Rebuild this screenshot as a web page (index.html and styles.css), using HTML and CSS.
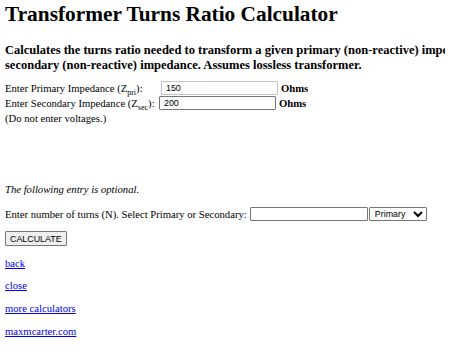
FILE: index.html
```
<!DOCTYPE html>
<html lang="en">
<head>
    <meta charset="UTF-8">
    <title>Transformer Turns Ratio Calculator</title>
    <link rel="stylesheet" href="styles.css">
</head>
<body>
    <h1>Transformer Turns Ratio Calculator</h1>
    <h3 class="intro">Calculates the turns ratio needed to transform a given primary (non-reactive) impedance to a given<br>
        secondary (non-reactive) impedance. Assumes lossless transformer.</h3>

    <form name="calc" class="calc">
        <div class="line">
            <span class="label">Enter Primary Impedance (Z<sub>pri</sub>):</span>
            <input type="text" class="field field-first" value="150">
            <b class="unit">Ohms</b>
        </div>
        <div class="line">
            <span class="label label-sec">Enter Secondary Impedance (Z<sub>sec</sub>):</span>
            <input type="text" class="field" value="200">
            <b class="unit">Ohms</b>
        </div>
        <div class="note">(Do not enter voltages.)</div>

        <!-- results get written here -->
        <div id="results" class="results"></div>

        <p class="optional"><i>The following entry is optional.</i></p>
        <p class="turns">Enter number of turns (N). Select Primary or Secondary:
            <input type="text" class="field field-turns"><select class="side">
                <option>Primary</option>
                <option>Secondary</option>
            </select>
        </p>
        <button type="button" class="calc-btn">CALCULATE</button>
    </form>

    <p><a href="#">back</a></p>
    <p><a href="#">close</a></p>
    <p><a href="#">more calculators</a></p>
    <p><a href="#">maxmcarter.com</a></p>
</body>
</html>
```

FILE: styles.css
```
html, body {
    overflow: hidden;
}

body, h1, h3, p, a, i, b, span, div {
    font-family: Tinos, "Liberation Serif", "Noto Serif", "DejaVu Serif", FreeSerif, serif;
}

body {
    margin: 0 5px;
    font-size: 10.67px;
    color: #000;
    background: #fff;
}

h1 {
    font-size: 21.33px;
    margin: 2px 0 0;
    white-space: nowrap;
}

.intro {
    font-size: 12.5px;
    margin: 16px 0 0;
    white-space: nowrap;
    line-height: 14.5px;
}

.calc {
    margin-top: 8px;
}

.line {
    display: flex;
    align-items: center;
    height: 15px;
}

.label {
    width: 156px;
}

.label-sec {
    width: 154px;
}

sub {
    font-size: 8px;
    vertical-align: -3px;
    line-height: 0;
}

.field {
    font-family: "Liberation Sans", Arial, sans-serif;
    font-size: 8.9px;
    height: 14px;
    box-sizing: border-box;
    padding: 0 4px;
    border: 1px solid #767676;
    border-radius: 1px;
    width: 117px;
    margin: 0;
}

.field-first {
    border-color: #c4c4c4;
}

.unit {
    margin-left: 3px;
}

.note {
    margin-top: 2px;
}

.results {
    height: 51px;
}

.optional {
    margin: 8px 0 0;
}

.turns {
    display: flex;
    align-items: center;
    margin: 12px 0 0;
}

.field-turns {
    margin-left: 3px;
    width: 118px;
}

.side {
    font-family: "Liberation Sans", Arial, sans-serif;
    font-size: 8.9px;
    height: 14px;
    width: 58px;
    padding: 0 1px;
    margin: 0 0 0 1px;
    border: 1px solid #767676;
    border-radius: 1px;
    background: #fff;
}

.calc-btn {
    display: block;
    margin-top: 10px;
    font-family: "Liberation Sans", Arial, sans-serif;
    font-size: 8.9px;
    height: 15px;
    padding: 0 4px;
    border: 1px solid #767676;
    border-radius: 1px;
    background: #efefef;
    color: #000;
}

p {
    margin: 10.67px 0;
}

a {
    color: #0000ee;
}
```
